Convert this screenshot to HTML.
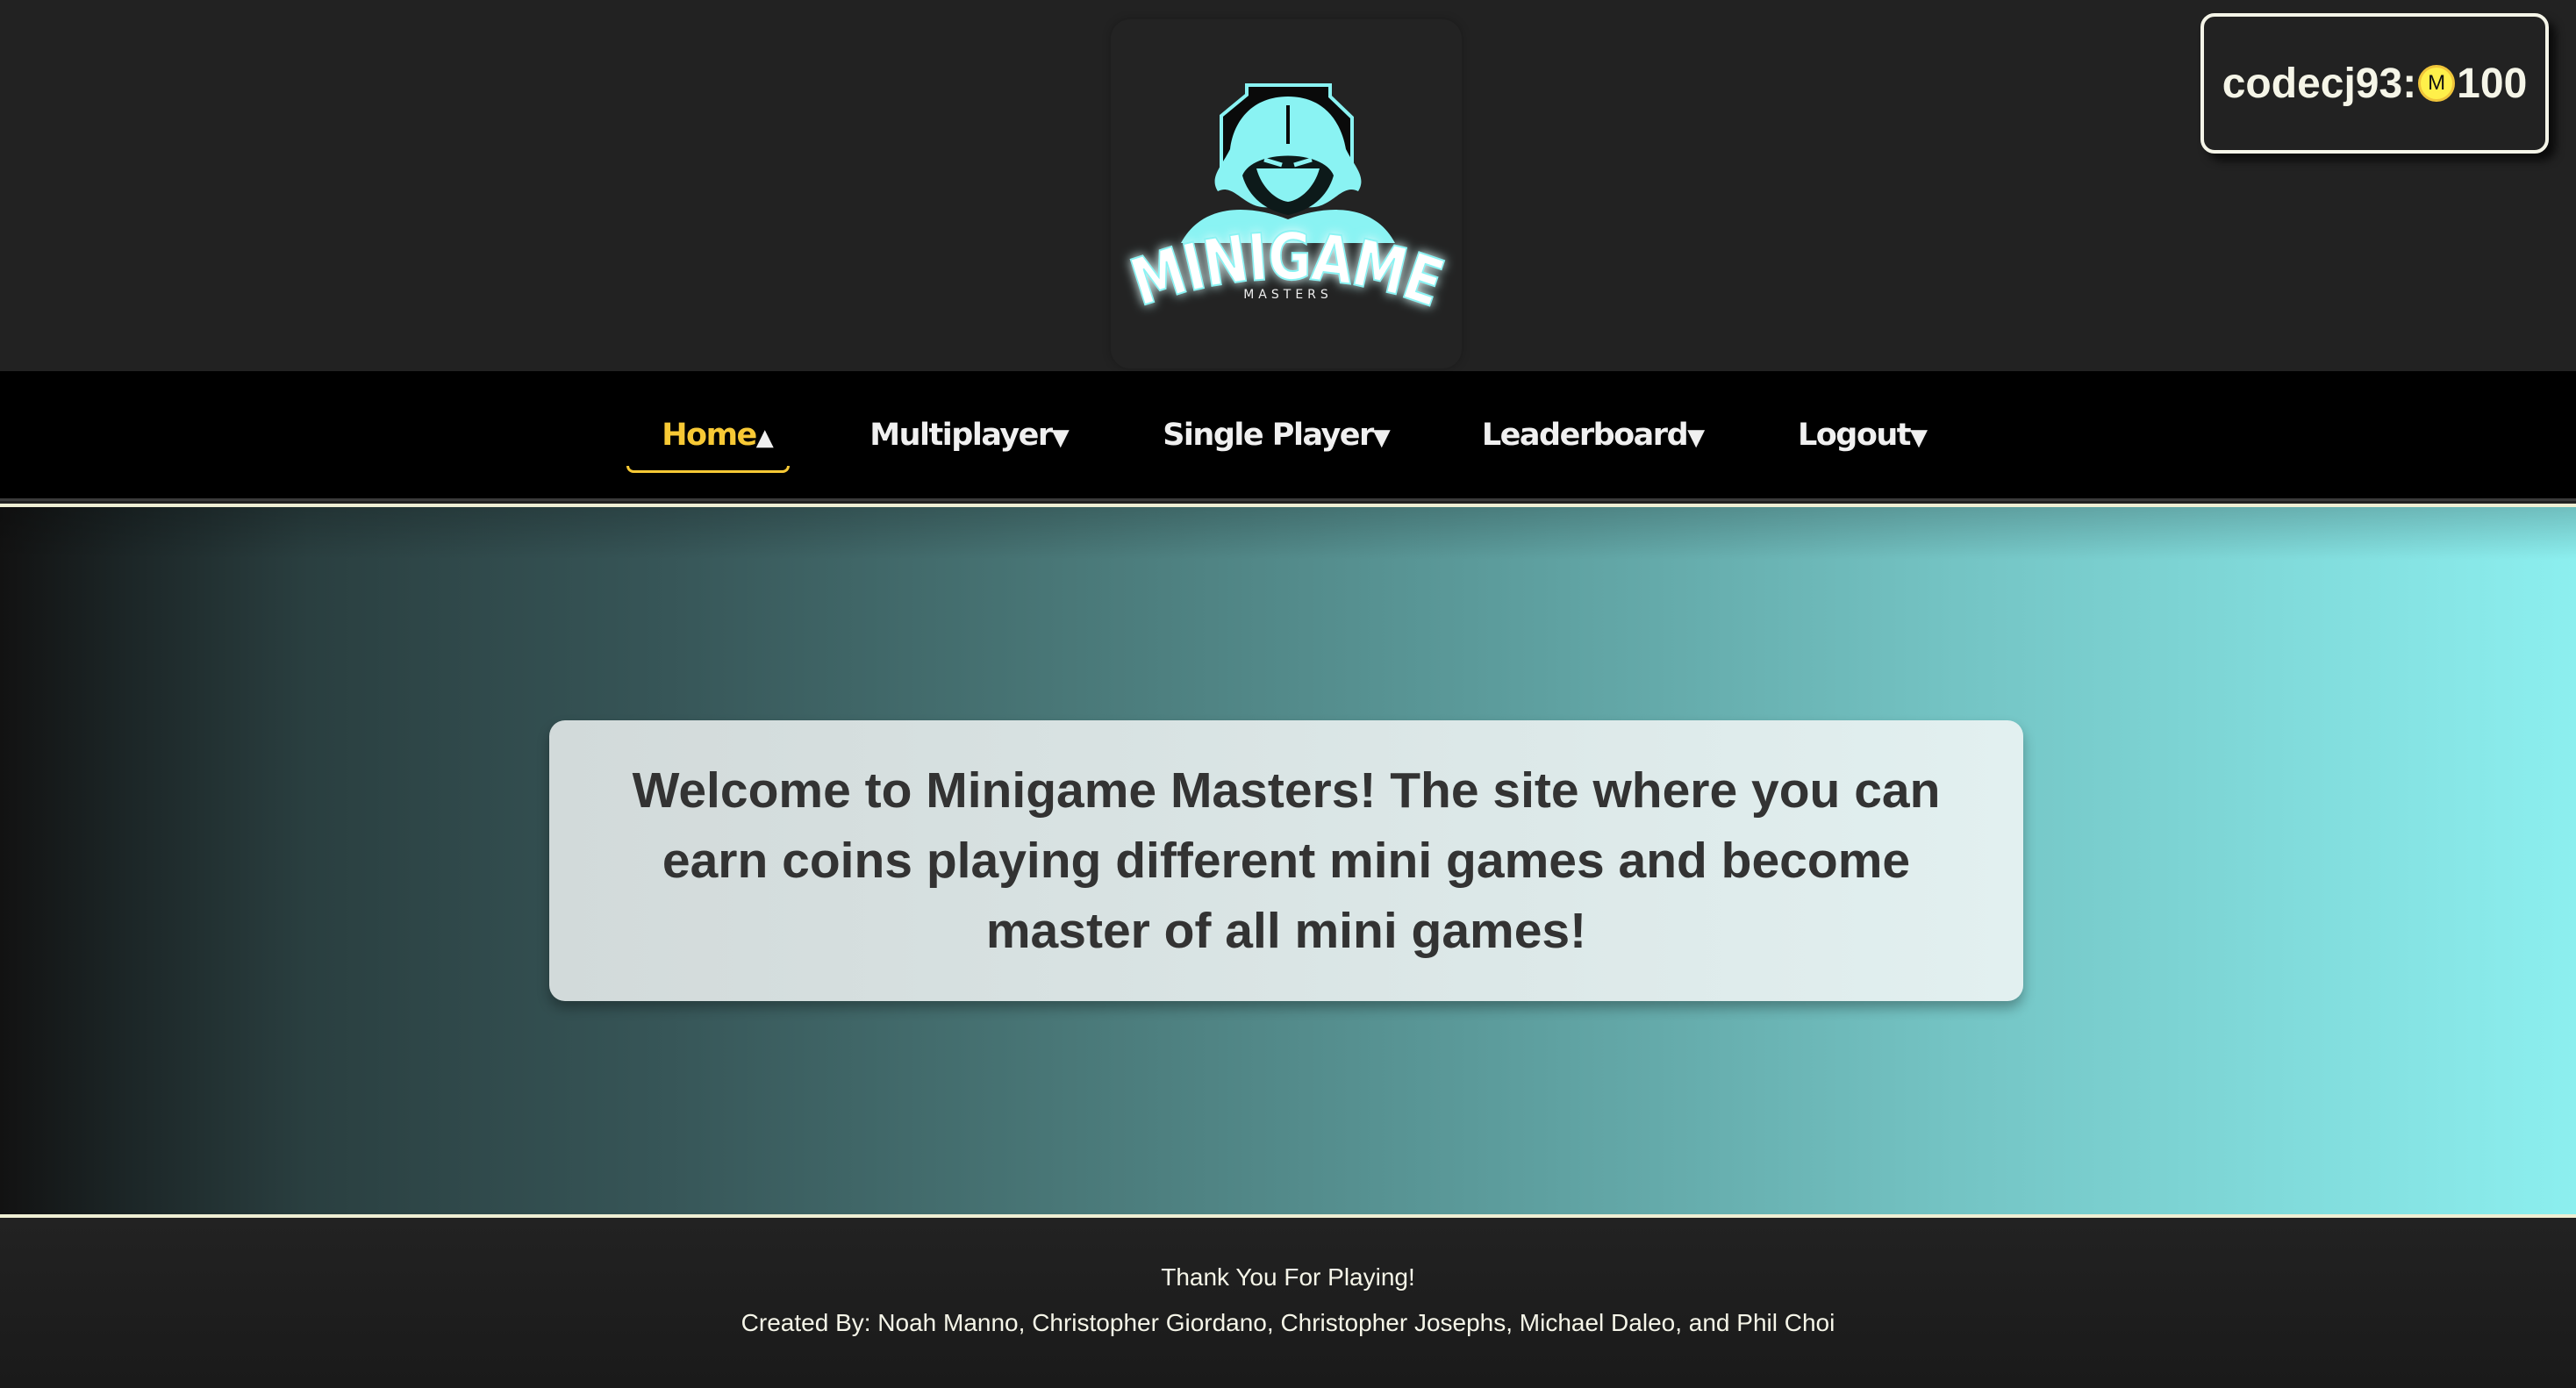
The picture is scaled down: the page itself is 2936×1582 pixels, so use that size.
<!DOCTYPE html>
<html><head><meta charset="utf-8"><style>
*{margin:0;padding:0;box-sizing:border-box}
body{width:2936px;height:1582px;overflow:hidden;background:#222;font-family:"Liberation Sans",sans-serif;position:relative}
.logo{position:absolute;left:1266px;top:22px;width:400px;height:398px;background:#232323;border-radius:22px;box-shadow:0 0 10px rgba(0,0,0,.25)}
.badge{position:absolute;left:2508px;top:15px;width:397px;height:160px;border:4px solid #f5f5e8;border-radius:16px;background:#222;box-shadow:8px 8px 10px rgba(0,0,0,.7);display:flex;align-items:center;justify-content:center;color:#f5f5e8;font-weight:bold;font-size:48px}
.coin{display:inline-block;width:42px;height:42px;border-radius:50%;background:#fff04a;border:3px solid #f0c53a;color:#111;font-size:24px;font-weight:normal;line-height:36px;text-align:center;margin:0 2px}
nav{position:absolute;left:0;top:423px;width:2936px;height:148px;background:#000;border-bottom:3px solid #3a3a3a}
.it{position:absolute;top:53px;font-family:"DejaVu Sans",sans-serif;font-weight:bold;font-size:35px;color:#f0f0f0;letter-spacing:-1.5px;transform:translateX(-50%);white-space:nowrap}
.it span{font-size:26px;letter-spacing:0}
.it.h{color:#f7c935}
.it.h span{color:#f0f0f0}
.ul{position:absolute;left:714px;top:108px;width:186px;height:8px;border:3px solid #f7c935;border-top:none;border-radius:0 0 14px 14px}
.cr1{position:absolute;left:0;top:574px;width:2936px;height:4px;background:#efefd4}
main{position:absolute;left:0;top:578px;width:2936px;height:806px;background:linear-gradient(90deg,#121212 0%,#1c2627 5%,#2a3f40 12%,#375658 26%,#4a7979 42%,#5c9c9c 58%,#74c4c4 76%,#8cefef 100%)}
main:before{content:"";position:absolute;left:0;top:0;right:0;height:60px;background:linear-gradient(rgba(0,0,0,.2),rgba(0,0,0,0))}
.card{position:absolute;left:626px;top:243px;width:1680px;height:320px;border-radius:18px;background:linear-gradient(90deg,#d2dada,#e2f0f0);box-shadow:0 8px 14px rgba(0,0,0,.3);display:flex;align-items:center;justify-content:center;text-align:center;font-weight:bold;font-size:57px;line-height:80px;color:#333;padding:0 60px}
.cr2{position:absolute;left:0;top:1384px;width:2936px;height:4px;background:#efefd4}
footer{position:absolute;left:0;top:1388px;width:2936px;height:194px;background:linear-gradient(#222,#1a1a1a);color:#f5f5e8;text-align:center;font-size:28px}
</style></head><body>
<div class="logo">
<svg width="400" height="398" viewBox="0 0 400 398">
<defs><filter id="g" x="-20%" y="-50%" width="140%" height="200%"><feGaussianBlur stdDeviation="6" result="b"/><feMerge><feMergeNode in="b"/><feMergeNode in="SourceGraphic"/></feMerge></filter>
<path id="arc" d="M28,330 Q200,262 372,330"/></defs>
<path d="M126 110 L155 86 L155 75 L250 75 L250 88 L275 112 L275 190 L126 190 Z" fill="#0a0a0a" stroke="#8af3f3" stroke-width="4"/>
<path d="M202 88 C162 88 140 115 136 148 C126 168 112 180 122 196 C142 186 152 218 182 214 C172 190 168 172 202 160 C236 172 232 190 222 214 C252 218 262 186 282 196 C292 180 278 168 268 148 C262 115 242 88 202 88 Z" fill="#8af3f3"/>
<path d="M150 178 C162 148 242 148 254 178 C247 203 227 218 202 223 C177 218 157 203 150 178 Z" fill="#0d1a1a"/>
<path d="M166 170 L238 170 C232 192 216 206 202 208 C188 206 172 192 166 170 Z" fill="#8af3f3"/>
<path d="M175 160 L195 166 M229 160 L209 166" stroke="#8af3f3" stroke-width="5"/>
<path d="M202 98 L202 142" stroke="#0a0a0a" stroke-width="4"/>
<path d="M80 255 C105 208 160 212 202 228 C244 212 299 208 324 255 Z" fill="#8af3f3"/>
<text font-family="DejaVu Sans" font-weight="bold" font-size="74" fill="#fff" stroke="#8af3f3" stroke-width="2" filter="url(#g)" letter-spacing="-2"><textPath href="#arc" startOffset="50%" text-anchor="middle" textLength="340" lengthAdjust="spacingAndGlyphs">MINIGAME</textPath></text>
<text x="202" y="318" text-anchor="middle" font-family="DejaVu Sans" font-size="14" fill="#eee" letter-spacing="5">MASTERS</text>
</svg>
</div>
<div class="badge">codecj93:<span class="coin">M</span>100</div>
<nav>
<div class="it h" style="left:818px">Home<span>▲</span></div>
<div class="ul"></div>
<div class="it" style="left:1105px">Multiplayer<span>▼</span></div>
<div class="it" style="left:1455px">Single Player<span>▼</span></div>
<div class="it" style="left:1816px">Leaderboard<span>▼</span></div>
<div class="it" style="left:2123px">Logout<span>▼</span></div>
</nav>
<div class="cr1"></div>
<main><div class="card">Welcome to Minigame Masters! The site where you can earn coins playing different mini games and become master of all mini games!</div></main>
<div class="cr2"></div>
<footer><div style="position:absolute;top:52px;width:100%">Thank You For Playing!</div><div style="position:absolute;top:104px;width:100%">Created By: Noah Manno, Christopher Giordano, Christopher Josephs, Michael Daleo, and Phil Choi</div></footer>
</body></html>
